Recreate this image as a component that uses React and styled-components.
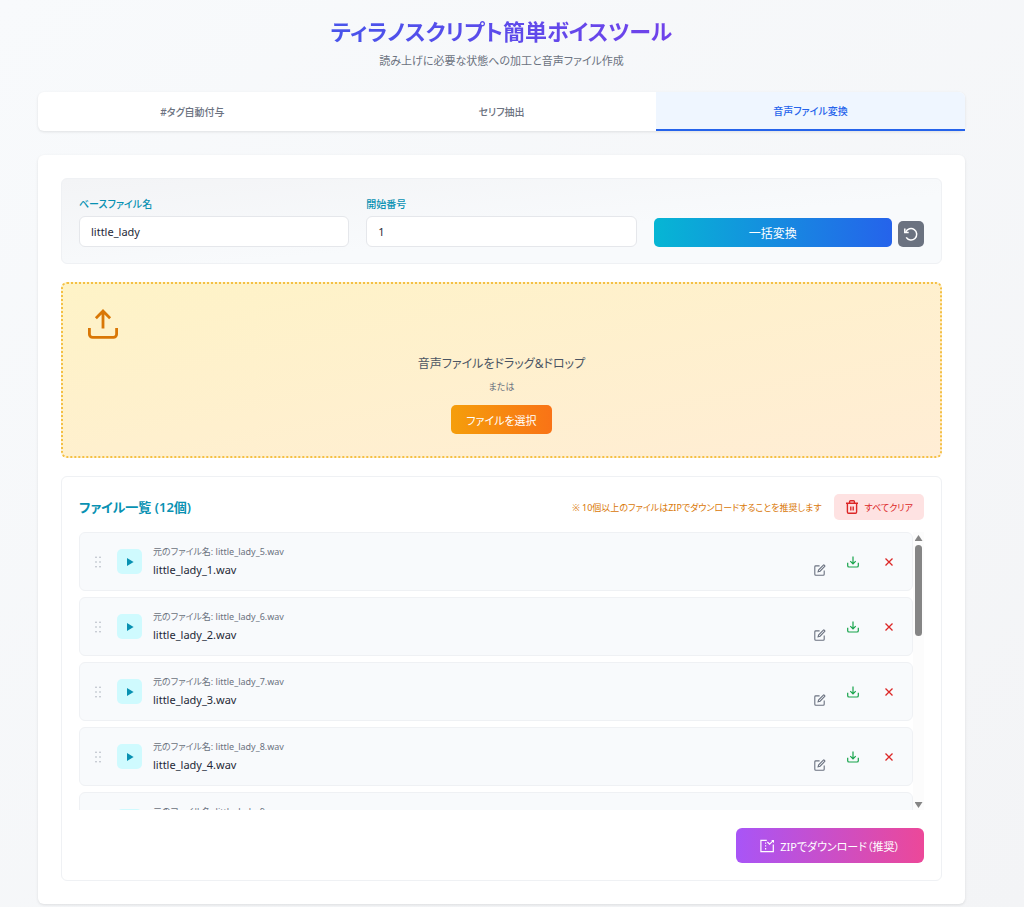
import React, { useState } from 'react';
import styled, { createGlobalStyle } from 'styled-components';

const files = Array.from({ length: 12 }, (_, i) => ({
  original: `little_lady_${i + 5}.wav`,
  name: `little_lady_${i + 1}.wav`,
}));

const tabs = ['#タグ自動付与', 'セリフ抽出', '音声ファイル変換'];

function UploadIcon() {
  return (
    <svg width="30" height="30" viewBox="0 0 30 30" fill="none" stroke="currentColor" strokeWidth="2.8" aria-hidden="true">
      <path d="M1.4 19v6.2a3.2 3.2 0 0 0 3.2 3.2h20.8a3.2 3.2 0 0 0 3.2-3.2V19" />
      <path d="M15 19.5V2.2M7.9 9.2 15 2.1l7.1 7.1" />
    </svg>
  );
}

function DownloadIcon() {
  return (
    <svg width="12" height="12" viewBox="0 0 12 12" fill="none" stroke="currentColor" strokeWidth="1.2" aria-hidden="true">
      <path d="M.7 6.8v2.9c0 .8.5 1.3 1.3 1.3h8c.8 0 1.3-.5 1.3-1.3V6.8" />
      <path d="M6 .6v7M3.3 5.1 6 7.8l2.7-2.7" />
    </svg>
  );
}

function ResetIcon() {
  return (
    <svg width="16" height="16" viewBox="0 0 16 16" fill="none" stroke="currentColor" strokeWidth="1.5" aria-hidden="true">
      <path d="M3.2 11.4A5.7 5.7 0 1 0 2.8 6" />
      <path d="M1.8 2.6v3.9h3.9" />
    </svg>
  );
}

function TrashIcon() {
  return (
    <svg width="12" height="14" viewBox="0 0 12 14" fill="none" stroke="currentColor" strokeWidth="1.4" aria-hidden="true">
      <path d="M0 3.2h12M3.6 3V1.6c0-.6.4-.9.9-.9h3c.5 0 .9.3.9.9V3M1.4 3.4v8.7c0 .8.4 1.2 1.2 1.2h6.8c.8 0 1.2-.4 1.2-1.2V3.4M4.8 6.6v3.8M7.2 6.6v3.8" />
    </svg>
  );
}

function EditIcon() {
  return (
    <svg width="12" height="12" viewBox="0 0 12 12" fill="none" stroke="currentColor" strokeWidth="1.1" aria-hidden="true">
      <path d="M5.6 1.9H1.8c-.6 0-1 .3-1 .9v7.4c0 .6.4 1 1 1h7.4c.6 0 1-.4 1-1V6.4" />
      <path d="M9.4 1.1c.5-.5 1.9.6 1.3 1.4L6.1 7.2l-2 .6.6-2z" />
    </svg>
  );
}

function CloseIcon() {
  return (
    <svg width="8" height="8" viewBox="0 0 8 8" fill="none" stroke="currentColor" strokeWidth="1.3" aria-hidden="true">
      <path d="m.5.5 7 7M7.5.5l-7 7" />
    </svg>
  );
}

function PlayIcon() {
  return (
    <svg width="8" height="8" viewBox="0 0 8 8" fill="currentColor" aria-hidden="true">
      <path d="M1 0v8l6.6-4z" />
    </svg>
  );
}

function GripIcon() {
  return (
    <svg width="6" height="12" viewBox="0 0 6 12" fill="currentColor" aria-hidden="true">
      {[1.2, 6, 10.8].map((y) => (
        <React.Fragment key={y}>
          <circle cx="1" cy={y} r=".7" />
          <circle cx="5" cy={y} r=".7" />
        </React.Fragment>
      ))}
    </svg>
  );
}

function ZipIcon() {
  return (
    <svg width="15" height="14" viewBox="0 0 15 14" fill="none" stroke="currentColor" strokeWidth="1.2" aria-hidden="true">
      <path d="M6.8 1.4H.9v11.2h12.4V5.5" />
      <path d="M5.6 3.4v1.4M5.6 6.2v1.4M5.6 9v1.4" />
      <path d="m7.4 3 2.2 2.2L13 1.9" />
      <path d="M11.2 1h2.8v3.2z" fill="currentColor" stroke="none" />
    </svg>
  );
}

function App() {
  const [baseName, setBaseName] = useState('little_lady');
  const [start, setStart] = useState('1');
  const [active, setActive] = useState(2);
  const [progress, setProgress] = useState(0);

  const onScroll = (e) => {
    const { scrollTop, scrollHeight, clientHeight } = e.currentTarget;
    setProgress(scrollTop / (scrollHeight - clientHeight));
  };

  return (
    <Page>
      <GlobalStyle />
      <Header>
        <Title>ティラノスクリプト簡単ボイスツール</Title>
        <Subtitle>読み上げに必要な状態への加工と音声ファイル作成</Subtitle>
      </Header>
      <Tabs>
        {tabs.map((tab, i) => (
          <Tab key={tab} type="button" $active={i === active} onClick={() => setActive(i)}>
            {tab}
          </Tab>
        ))}
      </Tabs>
      <Card>
        <Settings>
          <Field>
            <Label htmlFor="base-name">ベースファイル名</Label>
            <Input id="base-name" type="text" value={baseName} onChange={(e) => setBaseName(e.target.value)} />
          </Field>
          <Field>
            <Label htmlFor="start-number">開始番号</Label>
            <Input id="start-number" type="text" inputMode="numeric" value={start} onChange={(e) => setStart(e.target.value)} />
          </Field>
          <Actions>
            <ConvertButton type="button">一括変換</ConvertButton>
            <ResetButton type="button" aria-label="リセット"><ResetIcon /></ResetButton>
          </Actions>
        </Settings>

        <DropZone>
          <UploadMark><UploadIcon /></UploadMark>
          <DropTitle>音声ファイルをドラッグ&amp;ドロップ</DropTitle>
          <DropHint>または</DropHint>
          <SelectButton type="button">ファイルを選択</SelectButton>
        </DropZone>

        <FilePanel>
          <PanelHeader>
            <PanelTitle>ファイル一覧 (12個)</PanelTitle>
            <Notice>※ 10個以上のファイルはZIPでダウンロードすることを推奨します</Notice>
            <ClearButton type="button"><TrashIcon />すべてクリア</ClearButton>
          </PanelHeader>
          <ListArea>
            <FileList onScroll={onScroll}>
              {files.map((file) => (
                <FileRow key={file.name}>
                  <Grip><GripIcon /></Grip>
                  <PlayButton type="button" aria-label="再生"><PlayIcon /></PlayButton>
                  <FileInfo>
                    <OriginalName>元のファイル名: {file.original}</OriginalName>
                    <NameLine>
                      <FileName>{file.name}</FileName>
                      <IconButton type="button" $color="#6b7280" aria-label="名前を編集"><EditIcon /></IconButton>
                    </NameLine>
                  </FileInfo>
                  <IconButton type="button" $color="#16a34a" aria-label="ダウンロード"><DownloadIcon /></IconButton>
                  <IconButton type="button" $color="#dc2626" aria-label="削除"><CloseIcon /></IconButton>
                </FileRow>
              ))}
            </FileList>
            <ScrollBar aria-hidden="true">
              <Arrow />
              <Track>
                <Spacer style={{ flexGrow: progress }} />
                <Thumb />
                <Spacer style={{ flexGrow: 1 - progress }} />
              </Track>
              <Arrow $down />
            </ScrollBar>
          </ListArea>
          <PanelFooter>
            <ZipButton type="button"><ZipIcon />ZIPでダウンロード（推奨）</ZipButton>
          </PanelFooter>
        </FilePanel>
      </Card>
    </Page>
  );
}

const GlobalStyle = createGlobalStyle`
  * { box-sizing: border-box; }
  body { margin: 0; }
  body, button, input {
    font-family: 'Noto Sans', 'Noto Sans CJK JP', sans-serif;
    font-feature-settings: 'palt';
  }
  h1, h2, p, ul { margin: 0; padding: 0; }
  button { border: none; padding: 0; cursor: pointer; }
  svg { display: block; flex-shrink: 0; }
`;

const Page = styled.div`
  min-height: 100vh;
  padding: 12px 59px 3px 38px;
  background: linear-gradient(to bottom right, #f8fafc, #f3f4f6);
  color: #1f2937;
`;

const Header = styled.header`
  text-align: center;
  margin-bottom: 20px;
`;

const Title = styled.h1`
  font-size: 22px;
  line-height: 38px;
  font-weight: 600;
  background: linear-gradient(to right, #2563eb, #9333ea);
  background-clip: text;
  color: transparent;
`;

const Subtitle = styled.p`
  font-size: 11px;
  line-height: 22px;
  color: #6b7280;
`;

const Tabs = styled.nav`
  display: grid;
  grid-template-columns: repeat(3, 1fr);
  height: 39px;
  margin-bottom: 24px;
  background: #fff;
  border-radius: 6px;
  box-shadow: 0 1px 3px rgba(0, 0, 0, 0.1);
`;

const Tab = styled.button`
  font-size: 10px;
  font-weight: 500;
  color: ${(p) => (p.$active ? '#2563eb' : '#6b7280')};
  background: ${(p) => (p.$active ? '#eff6ff' : 'transparent')};
  border-bottom: ${(p) => (p.$active ? '2px solid #2563eb' : 'none')};

  &:first-child { border-top-left-radius: 6px; }
  &:last-child { border-top-right-radius: 6px; }
`;

const Card = styled.main`
  display: flex;
  flex-direction: column;
  gap: 18px;
  padding: 23px;
  background: #fff;
  border-radius: 6px;
  box-shadow: 0 1px 3px rgba(0, 0, 0, 0.1);
`;

const Settings = styled.section`
  display: grid;
  grid-template-columns: repeat(3, 1fr);
  gap: 17px;
  align-items: end;
  padding: 17px 17px 16px;
  background: linear-gradient(to bottom right, #f3f4f6, #f8fafc 60%);
  border: 1px solid #eff1f4;
  border-radius: 6px;
`;

const Field = styled.div`
  display: flex;
  flex-direction: column;
  gap: 4px;
`;

const Label = styled.label`
  font-size: 10px;
  line-height: 16px;
  font-weight: 500;
  color: #0891b2;
`;

const Input = styled.input`
  width: 100%;
  height: 31px;
  padding: 0 11px;
  border: 1px solid #e5e7eb;
  border-radius: 6px;
  background: #fff;
  color: #1f2937;
  font-size: 11px;
`;

const Actions = styled.div`
  display: flex;
  align-items: flex-end;
  gap: 6px;
`;

const ConvertButton = styled.button`
  flex: 1;
  height: 29px;
  border-radius: 5px;
  background: linear-gradient(to right, #06b6d4, #2563eb);
  color: #fff;
  font-size: 12px;
`;

const ResetButton = styled.button`
  display: grid;
  place-items: center;
  width: 26px;
  height: 26px;
  border-radius: 5px;
  background: #6b7280;
  color: #fff;
`;

const DropZone = styled.section`
  display: flex;
  flex-direction: column;
  align-items: center;
  padding: 25px 25px 22px;
  border: 2px dotted #f4c044;
  border-radius: 6px;
  background: linear-gradient(to bottom right, #fef3c7, #ffedd5) border-box;
`;

const UploadMark = styled.div`
  align-self: flex-start;
  margin-bottom: 14px;
  color: #d97706;
`;

const DropTitle = styled.p`
  font-size: 12px;
  line-height: 22px;
  color: #4b5563;
`;

const DropHint = styled.p`
  margin: 4px 0 10px;
  font-size: 9px;
  line-height: 16px;
  color: #6b7280;
`;

const SelectButton = styled.button`
  height: 29px;
  padding: 0 15px;
  border-radius: 5px;
  background: linear-gradient(to right, #f59e0b, #f97316);
  color: #fff;
  font-size: 11px;
`;

const FilePanel = styled.section`
  padding: 17px;
  border: 1px solid #eff1f4;
  border-radius: 6px;
`;

const PanelHeader = styled.div`
  display: flex;
  align-items: center;
  gap: 12px;
  margin-bottom: 12px;
`;

const PanelTitle = styled.h2`
  flex: 1;
  font-size: 13px;
  line-height: 20px;
  font-weight: 600;
  color: #0891b2;
`;

const Notice = styled.p`
  font-size: 9px;
  color: #d97706;
`;

const ClearButton = styled.button`
  display: flex;
  align-items: center;
  gap: 7px;
  height: 26px;
  padding: 0 11px 0 12px;
  border-radius: 5px;
  background: #fee2e2;
  color: #dc2626;
  font-size: 9px;
`;

const ListArea = styled.div`
  display: flex;
  height: 278px;
`;

const FileList = styled.ul`
  flex: 1;
  display: flex;
  flex-direction: column;
  gap: 6px;
  overflow-y: auto;
  scrollbar-width: none;
  list-style: none;
`;

const FileRow = styled.li`
  display: flex;
  align-items: center;
  flex-shrink: 0;
  height: 59px;
  padding: 0 11px;
  border: 1px solid #eff1f4;
  border-radius: 6px;
  background: #f8fafc;
`;

const Grip = styled.span`
  padding: 0 16px 0 4px;
  color: #9ca3af;
  cursor: grab;
`;

const PlayButton = styled.button`
  display: grid;
  place-items: center;
  width: 25px;
  height: 25px;
  margin-right: 11px;
  border-radius: 5px;
  background: #cffafe;
  color: #0891b2;
`;

const FileInfo = styled.div`
  flex: 1;
  min-width: 0;
`;

const OriginalName = styled.p`
  font-size: 9px;
  line-height: 16px;
  color: #6b7280;
`;

const NameLine = styled.div`
  display: flex;
  align-items: center;
  justify-content: space-between;
`;

const FileName = styled.span`
  font-size: 11px;
  line-height: 20px;
  color: #1f2937;
`;

const IconButton = styled.button`
  display: grid;
  place-items: center;
  width: 24px;
  height: 20px;
  background: none;
  color: ${(p) => p.$color};

  ${FileRow} > & {
    margin-left: 9px;
  }

  ${FileRow} > &:last-child {
    margin-left: 12px;
  }
`;

const ScrollBar = styled.div`
  display: flex;
  flex-direction: column;
  align-items: center;
  gap: 4px;
  width: 11px;
  padding: 3px 0 2px;
  background: #fcfcfc;
`;

const Arrow = styled.span`
  width: 8px;
  height: 6px;
  background: #858585;
  clip-path: ${(p) => (p.$down ? 'polygon(0 0, 100% 0, 50% 100%)' : 'polygon(50% 0, 100% 100%, 0 100%)')};
`;

const Track = styled.div`
  flex: 1;
  display: flex;
  flex-direction: column;
`;

const Thumb = styled.div`
  width: 7px;
  height: 36%;
  border-radius: 4px;
  background: #858585;
`;

const Spacer = styled.div`
  flex-basis: 0;
`;

const PanelFooter = styled.div`
  display: flex;
  justify-content: flex-end;
  margin-top: 18px;
`;

const ZipButton = styled.button`
  display: flex;
  align-items: center;
  gap: 5px;
  height: 35px;
  padding: 0 24px;
  border-radius: 6px;
  background: linear-gradient(to right, #a855f7, #ec4899);
  color: #fff;
  font-size: 11px;
`;

export default App;
